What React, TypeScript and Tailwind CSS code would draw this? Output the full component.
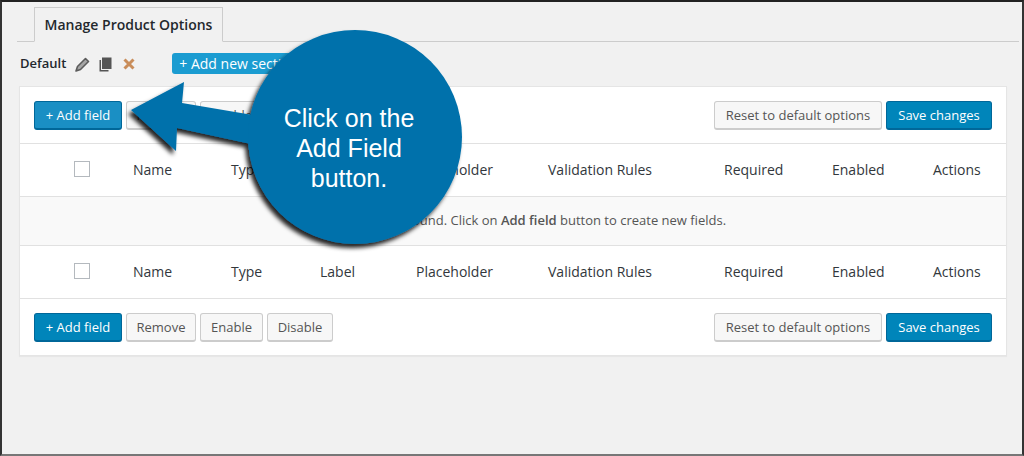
const font = "font-['Open_Sans','Noto_Sans',sans-serif]";

function BlueButton({ label, className = 'bg-[#0085ba]' }: { label: string; className?: string }) {
  return (
    <button className={`h-[29px] rounded-[3px] border border-[#006799] border-b-2 text-[13px] font-medium leading-[26px] text-white ${className}`}>
      {label}
    </button>
  );
}

function GrayButton({ label, className = '' }: { label: string; className?: string }) {
  return (
    <button className={`h-[29px] rounded-[3px] border border-[#ccc] border-b-2 bg-[#f7f7f7] text-[13px] leading-[26px] text-[#555] ${className}`}>
      {label}
    </button>
  );
}

function ColumnHeads({ className = '' }: { className?: string }) {
  return (
    <div className={`flex h-[53px] items-center pb-[2px] text-[14px] text-[#32373c] ${className}`}>
      <div className="w-[113px] pl-[54px]">
        <span className="block size-4 border border-[#b4b9be] bg-white" />
      </div>
      <span className="w-[98px]">Name</span>
      <span className="w-[89px]">Type</span>
      <span className="w-[96px]">Label</span>
      <span className="w-[132px]">Placeholder</span>
      <span className="w-[176px]">Validation Rules</span>
      <span className="w-[108px]">Required</span>
      <span className="w-[101px]">Enabled</span>
      <span>Actions</span>
    </div>
  );
}

function Toolbar({ className = 'h-[57px]', addClass }: { className?: string; addClass?: string }) {
  return (
    <div className={`flex items-center justify-between px-[14px] ${className}`}>
      <div className="flex gap-1">
        <BlueButton label="+ Add field" className={`w-[88px] ${addClass ?? 'bg-[#0085ba]'}`} />
        <GrayButton label="Remove" className="w-[70px]" />
        <GrayButton label="Enable" className="w-[63px]" />
        <GrayButton label="Disable" className="w-[66px]" />
      </div>
      <div className="flex gap-1">
        <GrayButton label="Reset to default options" className="w-[168px]" />
        <BlueButton label="Save changes" className="w-[106px] bg-[#0085ba]" />
      </div>
    </div>
  );
}

export default function App() {
  return (
    <div className={`relative h-[456px] w-[1024px] overflow-hidden border-x-[2px] border-t-[2px] border-b-[2px] border-x-[#333] border-t-[#222] border-b-[#777] bg-[#f1f1f1] ${font}`}>
      <div className="ml-[15px] mr-[3px] flex h-[40px] items-end border-b border-[#ccc] pl-[17px]">
        <div className="-mb-px flex h-[35px] w-[189px] items-center justify-center border border-[#ccc] border-b-[#f1f1f1] text-[14px] font-semibold text-[#23282d]">
          Manage Product Options
        </div>
      </div>
      <div className="flex h-[44px] items-center pl-[18px]">
        <span className="text-[13px] font-semibold text-[#23282d]">Default</span>
        <svg viewBox="0 0 15 15" className="ml-[9px] size-[15px]">
          <path d="M1 14 L2.5 9.5 L10.5 1.5 L13.5 4.5 L5.5 12.5 Z" fill="#a5a5a5" stroke="#5c5c5c" strokeWidth="1.6" strokeLinejoin="round" />
        </svg>
        <svg viewBox="0 0 14 15" className="ml-[8px] size-[15px]">
          <path d="M1 3h1.5V13H10v1.5H1z M3.5 .5H13V12H3.5z" fill="#555" />
        </svg>
        <svg viewBox="0 0 12 12" className="ml-[10px] size-[12px]">
          <path d="M1.5 1.5l9 9M10.5 1.5l-9 9" stroke="#c98d5a" strokeWidth="3" />
        </svg>
        <button className="-mt-[2px] ml-[37px] h-[21px] w-[170px] rounded-[3px] bg-[#1b9cd1] pl-[7px] text-left text-[14px] font-medium text-white">
          + Add new section
        </button>
      </div>
      <div className="ml-[17px] w-[988px] border border-[#e5e5e5] bg-white shadow-[0_1px_1px_rgba(0,0,0,0.04)]">
        <Toolbar className="h-[57px] border-b border-[#e1e1e1]" addClass="bg-[#1a8fc4]" />
        <ColumnHeads className="border-b border-[#e1e1e1]" />
        <div className="flex h-[49px] items-center justify-center border-b border-[#e1e1e1] bg-[#f9f9f9] pl-[51px] text-[13px] text-[#555]">
          <span>
            No fields found. Click on <b className="font-semibold">Add field</b> button to create new fields.
          </span>
        </div>
        <ColumnHeads className="border-b border-[#e1e1e1]" />
        <Toolbar className="h-[56px] pt-px" />
      </div>

      {/* callout bubble + arrow */}
      <svg viewBox="0 0 1024 456" className="absolute -left-[2px] -top-[2px] h-[456px] w-[1024px]">
        <defs>
          <filter id="sh" x="-20%" y="-20%" width="140%" height="140%">
            <feDropShadow dx="-3" dy="4" stdDeviation="2" floodColor="#000" floodOpacity="0.85" />
          </filter>
        </defs>
        <g filter="url(#sh)" fill="#0071ab">
          <path d="M131 110 L184 82 L182 103 L270 118 L270 148 L177 128 L176 151 Z" />
          <circle cx="355" cy="137" r="107" />
        </g>
      </svg>
      <div className="absolute left-[267px] top-[101px] w-[160px] text-center font-['Liberation_Sans',sans-serif] text-[25px] leading-[30px] text-white">
        Click on the Add Field button.
      </div>
    </div>
  );
}
